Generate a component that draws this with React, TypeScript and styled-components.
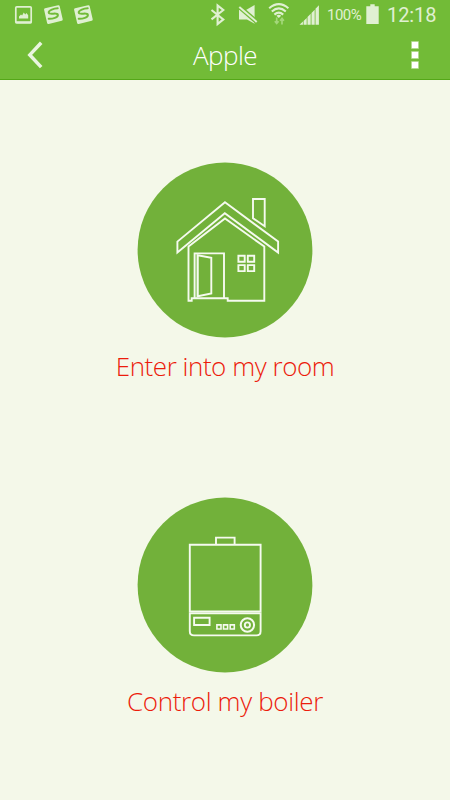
import React from "react";
import styled, { createGlobalStyle } from "styled-components";

const GlobalStyle = createGlobalStyle`
  * { box-sizing: border-box; }
  html, body { margin: 0; padding: 0; }
  body { background: #f4f8e9; }
`;

const Screen = styled.div`
  display: flex;
  flex-direction: column;
  width: 450px;
  height: 800px;
  overflow: hidden;
  background: #f4f8e9;
  font-family: "Open Sans", "Noto Sans", sans-serif;
  font-weight: 300;
`;

const TopArea = styled.div`
  height: 80px;
  background: #72bb37;
  border-bottom: 1px solid #54a718;
`;

const StatusBar = styled.div`
  display: flex;
  justify-content: space-between;
  height: 30px;
  color: #e0f0d2;
  font-family: Roboto, sans-serif;
`;

const StatusGroup = styled.div`
  display: flex;
  align-items: flex-start;
  height: 30px;
`;

const Glyph = styled.svg`
  display: block;
  flex: none;
  height: 30px;
`;

const StatusText = styled.span<{ $size: number; $width: number; $top: number; $spacing?: number; $weight: number }>`
  display: block;
  flex: none;
  width: ${(p) => p.$width}px;
  padding-top: ${(p) => p.$top}px;
  font-size: ${(p) => p.$size}px;
  line-height: 20px;
  font-weight: ${(p) => p.$weight};
  letter-spacing: ${(p) => p.$spacing ?? 0}px;
  white-space: nowrap;
`;

const TitleBar = styled.header`
  display: grid;
  grid-template-columns: 70px 1fr 70px;
  align-items: center;
  height: 49px;
`;

const IconButton = styled.button`
  display: flex;
  align-items: center;
  justify-content: center;
  height: 49px;
  padding: 0;
  border: 0;
  background: none;
`;

const Title = styled.h1`
  margin: 0;
  padding-top: 2px;
  color: #fff;
  font-size: 26px;
  line-height: 47px;
  font-weight: 300;
  letter-spacing: -0.5px;
  text-align: center;
`;

const Menu = styled.main`
  display: flex;
  flex-direction: column;
  padding-top: 82px;
`;

const MenuItem = styled.section`
  display: flex;
  flex-direction: column;
  align-items: center;
  height: 335px;
`;

const Badge = styled.svg`
  display: block;
  width: 176px;
  height: 176px;
`;

const Label = styled.div<{ $spacing: number }>`
  margin-top: 10px;
  color: #ec1c0c;
  font-size: 26px;
  line-height: 36px;
  letter-spacing: ${(p) => p.$spacing}px;
  white-space: nowrap;
`;

const PALE = "#e0f0d2";

const PictureIcon = () => (
  <Glyph width="40" viewBox="0 0 40 30">
    <rect x="15.8" y="6.8" width="15.4" height="16" rx="1" fill="none" stroke={PALE} strokeWidth="1.7" />
    <path d="M15.5 21.2h16v2h-16z" fill={PALE} />
    <path d="M19 18.4v-2l2-1.8 1.1.9 1.7-2.9 1.4 2 1.3-1.5 1.7 2.2v3.1z" fill={PALE} />
  </Glyph>
);

const NoteIcon = () => (
  <Glyph width="30" viewBox="40 0 30 30">
    <g transform="rotate(-13 53.3 14.6)">
      <rect x="45.4" y="6.6" width="16" height="16" rx="1.3" fill={PALE} />
      <path
        d="M59 9.5c-3.3-.6-9.7-.5-9.7 2.3 0 2.5 8.4 1.2 8.4 3.9 0 2.9-6.2 2.9-9.8 1.9"
        fill="none"
        stroke="#72bb37"
        strokeWidth="2"
        strokeLinecap="round"
      />
    </g>
  </Glyph>
);

const BluetoothIcon = () => (
  <Glyph width="28" viewBox="205 0 28 30">
    <path d="M211.5 10l11.8 9.4-5.7 4.6V5.4l5.7 4.6-11.8 9.4" fill="none" stroke={PALE} strokeWidth="2.1" />
  </Glyph>
);

const MuteIcon = () => (
  <Glyph width="33" viewBox="233 0 33 30">
    <path d="M239 10h7l8.6-4.9v18.7l-7.6-4.4h-8z" fill={PALE} />
    <path d="M238.4 6.1l19.2 16.6" stroke="#72bb37" strokeWidth="4.6" />
    <path d="M239.3 6.9l17.4 15" stroke={PALE} strokeWidth="2" />
  </Glyph>
);

const WifiIcon = () => (
  <Glyph width="30" viewBox="266 0 30 30">
    <g fill="none" stroke={PALE} strokeWidth="2.1">
      <path d="M269.2 8.2q9.6-8.1 19.2 0" />
      <path d="M271.8 11.5q7-6.1 14 0" />
      <path d="M274.4 14.6q4.4-4 8.8 0" />
    </g>
    <path d="M276.4 15.8q2.4-2 4.8 0l-2.4 2.1z" fill={PALE} />
    <path
      d="M276.7 17.5v6.2M274.8 21.2l1.9 2.3 1.9-2.3M282 24.5v-6M280.1 20.7l1.9-2.3 1.9 2.3"
      fill="none"
      stroke="#a4d77a"
      strokeWidth="1.7"
    />
  </Glyph>
);

const SignalIcon = () => (
  <Glyph width="31" viewBox="296 0 31 30">
    <g fill={PALE}>
      <path d="M299.5 24.8l3.4-3.3v3.3zM303.6 20.9l3.1-3v6.9h-3.1zM307.5 16.9l3.2-3.1v11h-3.2zM311.5 13l3.2-3.2v15h-3.2zM315.5 8.8l3.4-3.6v19.6h-3.4z" />
    </g>
  </Glyph>
);

const BatteryIcon = () => (
  <Glyph width="22" viewBox="365 0 22 30">
    <path d="M366.3 6.2h4V4.2h4.4v2h4v17.8h-12.4z" fill={PALE} />
  </Glyph>
);

const BackIcon = () => (
  <svg width="70" height="49" viewBox="0 30 70 49">
    <path d="M41.2 42.7L29.8 54.9l11.4 12.2" fill="none" stroke="#eaf5df" strokeWidth="3.5" />
  </svg>
);

const MoreIcon = () => (
  <svg width="70" height="49" viewBox="380 30 70 49">
    <g fill="#fff" stroke="#b3dc91" strokeWidth="0.8">
      <rect x="411.6" y="41.6" width="6.8" height="6.8" />
      <rect x="411.6" y="51.6" width="6.8" height="6.8" />
      <rect x="411.6" y="61.6" width="6.8" height="6.8" />
    </g>
  </svg>
);

const HouseBadge = () => (
  <Badge viewBox="137 162 176 176">
    <circle cx="225" cy="250" r="87.4" fill="#72b13a" />
    <g fill="none" stroke="#f5faef" strokeWidth="1.9">
      <path d="M225 202.2l53.1 39.4v10.9L224.8 213.2l-47.4 39.2v-10.8z" />
      <path d="M253 199h11.7v27.2L253 218.2z" />
      <path d="M188.5 246.6L225 218.4l39.3 28.2v54.2h-36.6v-2.5h-36v2.5h-3.2z" />
      <path d="M194.6 298v-44.6H224V298" />
      <path d="M197.8 255.2l13.5 2.6v35.6l-13.5 2.9z" />
      <path d="M196.3 254v44" strokeWidth="0.8" opacity="0.55" />
      <path d="M238.4 255.7h6.3v6h-6.3zM247.8 255.7h6.4v6h-6.4zM238.4 265.1h6.3v6h-6.3zM247.8 265.1h6.4v6h-6.4z" />
    </g>
  </Badge>
);

const BoilerBadge = () => (
  <Badge viewBox="137 497 176 176">
    <circle cx="225" cy="585" r="87.4" fill="#72b13a" />
    <g fill="none" stroke="#f5faef" strokeWidth="1.9">
      <path d="M216 544.6v-7h18.6v7" />
      <path d="M189.8 544.8h70.8v66.6h-70.8z" />
      <path d="M189.8 613.3h70.8v17.9q0 4.2-4.2 4.2H194q-4.2 0-4.2-4.2z" />
      <path d="M194.1 617.7h15.5v7.3h-15.5z" />
      <path d="M216.9 624.9h4.1v4.1h-4.1zM223.5 624.9h4.1v4.1h-4.1zM230.2 624.9h4.1v4.1h-4.1z" strokeWidth="1.6" />
      <circle cx="247.4" cy="625" r="6.7" strokeWidth="2" />
      <circle cx="247.4" cy="625" r="2.6" />
    </g>
  </Badge>
);

export default function App() {
  return (
    <Screen>
      <GlobalStyle />
      <TopArea>
        <StatusBar>
          <StatusGroup>
            <PictureIcon />
            <NoteIcon />
            <NoteIcon />
          </StatusGroup>
          <StatusGroup>
            <BluetoothIcon />
            <MuteIcon />
            <WifiIcon />
            <SignalIcon />
            <StatusText $size={15} $width={38} $top={5} $weight={400} $spacing={-0.5}>100%</StatusText>
            <BatteryIcon />
            <StatusText $size={20} $width={63} $top={5} $weight={400} $spacing={-0.1}>12:18</StatusText>
          </StatusGroup>
        </StatusBar>
        <TitleBar>
          <IconButton aria-label="Back">
            <BackIcon />
          </IconButton>
          <Title>Apple</Title>
          <IconButton aria-label="More options">
            <MoreIcon />
          </IconButton>
        </TitleBar>
      </TopArea>
      <Menu>
        <MenuItem>
          <HouseBadge />
          <Label $spacing={-0.46}>Enter into my room</Label>
        </MenuItem>
        <MenuItem>
          <BoilerBadge />
          <Label $spacing={-0.36}>Control my boiler</Label>
        </MenuItem>
      </Menu>
    </Screen>
  );
}
